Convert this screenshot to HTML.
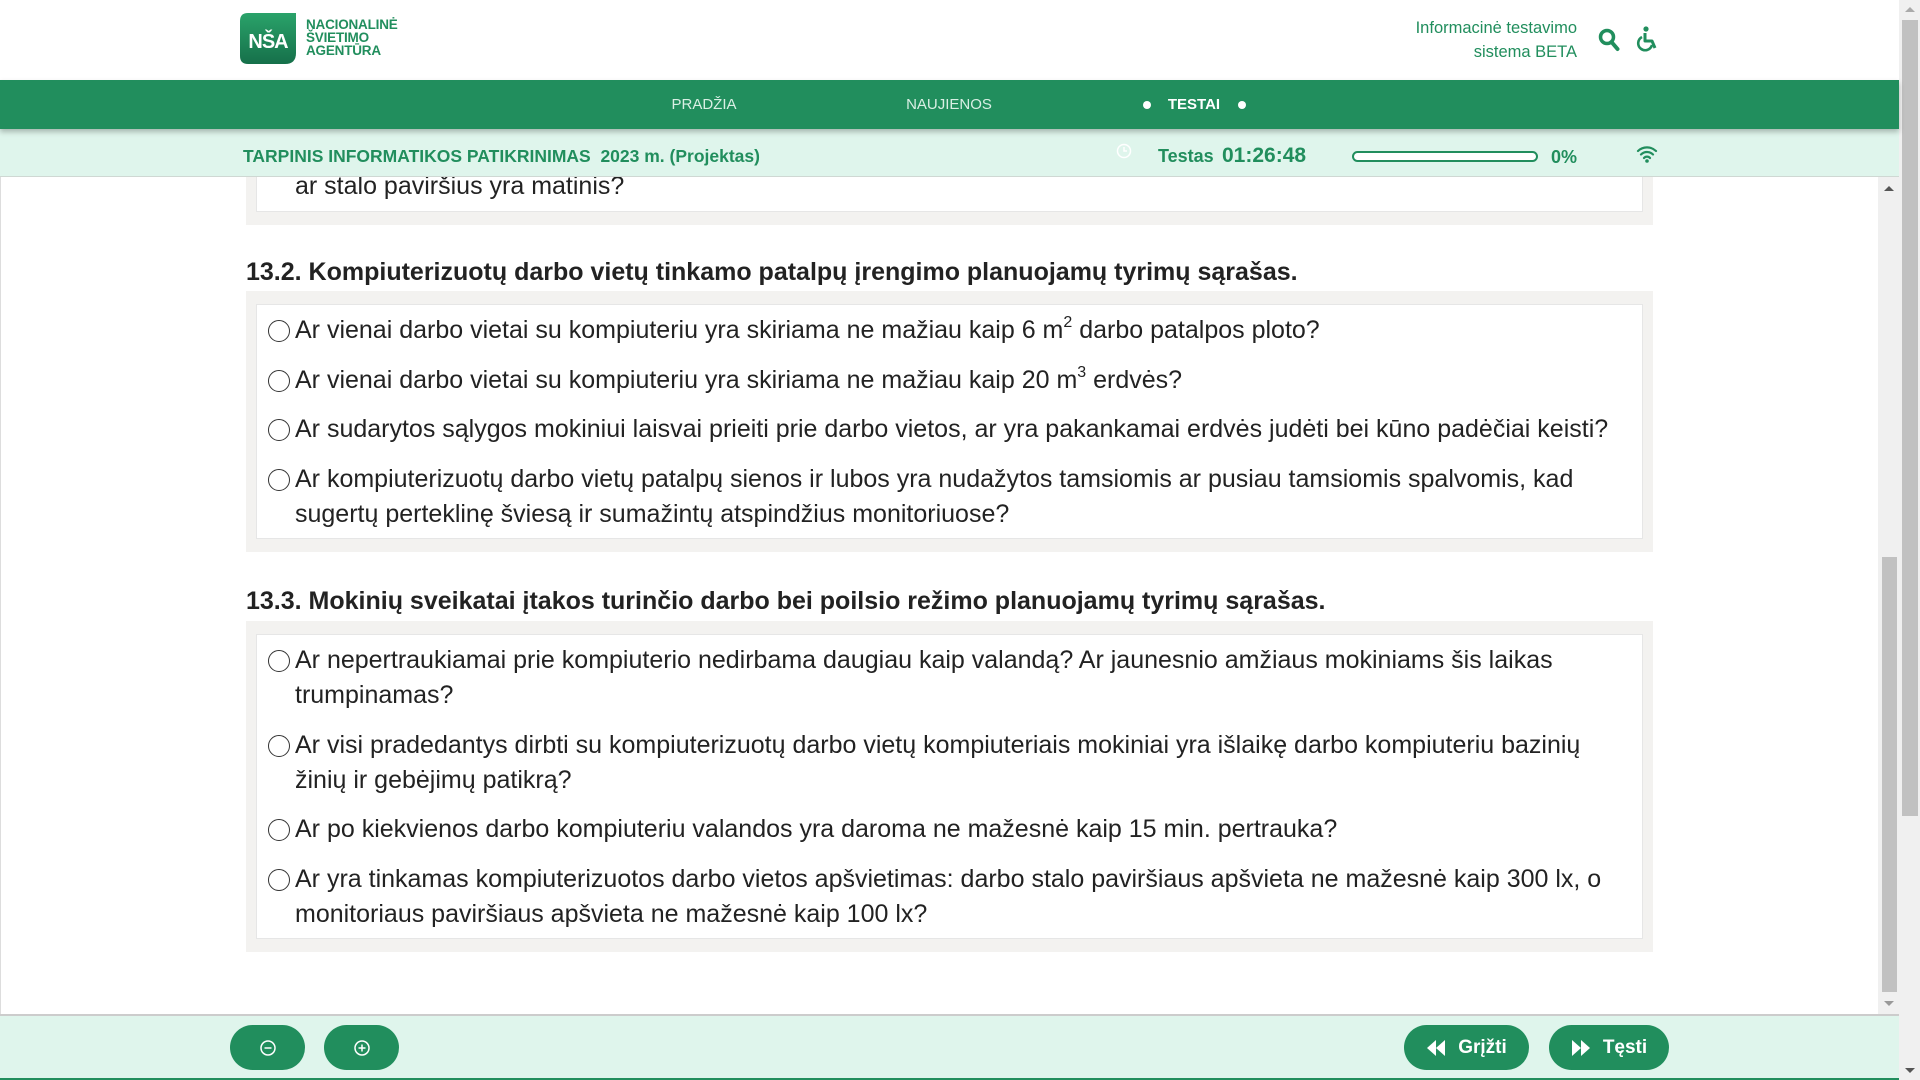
<!DOCTYPE html>
<html><head><meta charset="utf-8"><style>
*{box-sizing:border-box;margin:0;padding:0}
body{width:1920px;height:1080px;overflow:hidden;background:#fff;font-family:"Liberation Sans",Arial,sans-serif;position:relative;color:#222}
.hdr{position:absolute;left:0;top:0;width:1899px;height:80px;background:#fff}
.nav{position:absolute;left:0;top:80px;width:1899px;height:49px;background:#218e5d;box-shadow:0 3px 5px rgba(0,0,0,.25);z-index:3}
.nav span{position:absolute;top:16px;font-size:15px;color:#d9efe4;transform:translateX(-50%)}
.sub{position:absolute;left:0;top:129px;width:1899px;height:48px;background:#dff5ec;border-bottom:1px solid #cfd8d3;z-index:2}
.g{color:#218e5d;font-weight:bold}
.content{position:absolute;left:0;top:177px;width:1878px;height:837px;overflow:hidden;background:#fff;border-left:1px solid #ddd}
.card{position:absolute;left:245px;width:1407px;background:#f3f2f0;padding:13px 10px 13px 10px}
.inner{background:#fff;border:1px solid #e6e6e6;padding:8px 0 6px 38px}
.opt{position:relative;font-size:25px;line-height:35px;margin-bottom:14.6px;padding-right:20px}
.opt:last-child{margin-bottom:0}
.opt:before{content:"";position:absolute;left:-27px;top:7px;width:20px;height:20px;border:1.4px solid #333;border-radius:50%}
h3{position:absolute;left:245px;font-size:25px;font-weight:bold;color:#222}
sup{font-size:16px;line-height:0;vertical-align:0;position:relative;top:-11px}
.foot{position:absolute;left:0;top:1014px;width:1899px;height:66px;background:#dff5ec;border-top:2px solid #ccc;border-bottom:2px solid #218e5d}
.btn{position:absolute;top:9px;height:45px;background:#218e5d;border-radius:23px;color:#fff;font-weight:bold;font-size:19px;display:flex;align-items:center;justify-content:center;gap:12px}
.sb{position:absolute;background:#f0f0f0}
</style></head><body>
<div class="hdr">
 <svg style="position:absolute;left:240px;top:13px" width="56" height="51" viewBox="0 0 56 51"><defs><linearGradient id="lg" x1="0" y1="0" x2="0" y2="1"><stop offset="0" stop-color="#2aa36a"/><stop offset="1" stop-color="#16704a"/></linearGradient></defs><path d="M8 0H56V40Q56 51 45 51H8Q0 51 0 43V8Q0 0 8 0Z" fill="url(#lg)"/><text x="28" y="35" text-anchor="middle" font-family="Liberation Sans" font-weight="bold" font-size="20" fill="#fff" letter-spacing="-1">NŠA</text></svg>
 <div style="position:absolute;left:306px;top:18px;font-size:13.5px;line-height:13px;font-weight:bold;color:#218e5d;letter-spacing:-.2px">NACIONALINĖ<br>ŠVIETIMO<br>AGENTŪRA</div>
 <div style="position:absolute;right:322px;top:16px;text-align:right;font-size:16.5px;line-height:24px;color:#218e5d">Informacinė testavimo<br>sistema BETA</div>
 <svg style="position:absolute;left:1598px;top:28px" width="22" height="24" viewBox="0 0 22 24"><circle cx="9" cy="9" r="6.5" fill="none" stroke="#218e5d" stroke-width="3.5"/><path d="M13.5 14l6 7" stroke="#218e5d" stroke-width="4" stroke-linecap="round"/></svg>
 <svg style="position:absolute;left:1636px;top:26px" width="24" height="26" viewBox="0 0 24 26"><circle cx="10" cy="3" r="2.6" fill="#218e5d"/><path d="M9 7v8h7l3 7" fill="none" stroke="#218e5d" stroke-width="3" stroke-linejoin="round"/><path d="M6 11a7 7 0 1 0 10 8" fill="none" stroke="#218e5d" stroke-width="2.6"/></svg>
</div>
<div class="nav">
 <span style="left:704px">PRADŽIA</span>
 <span style="left:949px">NAUJIENOS</span>
 <span style="left:1194px;color:#fff;font-weight:bold">TESTAI</span>
 <i style="position:absolute;left:1143px;top:21px;width:8px;height:8px;border-radius:50%;background:#fff"></i>
 <i style="position:absolute;left:1238px;top:21px;width:8px;height:8px;border-radius:50%;background:#fff"></i>
</div>
<div class="sub">
 <div class="g" style="position:absolute;left:243px;top:17px;font-size:17.5px">TARPINIS INFORMATIKOS PATIKRINIMAS&nbsp; 2023 m. (Projektas)</div>
 <svg style="position:absolute;left:1116px;top:14px" width="16" height="16"><circle cx="8" cy="8" r="6.5" fill="none" stroke="#fff" stroke-width="1.5"/><path d="M8 4v4h3" stroke="#fff" fill="none" stroke-width="1.5"/></svg>
 <div class="g" style="position:absolute;left:1158px;top:17px;font-size:18px">Testas</div>
 <div class="g" style="position:absolute;left:1222px;top:15px;font-size:21px">01:26:48</div>
 <div style="position:absolute;left:1352px;top:22px;width:186px;height:11px;border:2px solid #218e5d;border-radius:6px;background:#fff"></div>
 <div class="g" style="position:absolute;left:1551px;top:18px;font-size:18px">0%</div>
 <svg style="position:absolute;left:1636px;top:16px" width="22" height="18" viewBox="0 0 22 18"><path d="M2 6a13 13 0 0 1 18 0M5 9.5a8.5 8.5 0 0 1 12 0M8 13a4 4 0 0 1 6 0" fill="none" stroke="#218e5d" stroke-width="2.2" stroke-linecap="round"/><circle cx="11" cy="16" r="1.8" fill="#218e5d"/></svg>
</div>
<div class="content">
 <div class="card" style="top:-60px;height:108px"><div class="inner" style="height:82px;padding-top:38px"><div style="font-size:25px;line-height:35px">ar stalo paviršius yra matinis?</div></div></div>
 <h3 style="top:81px">13.2. Kompiuterizuotų darbo vietų tinkamo patalpų įrengimo planuojamų tyrimų sąrašas.</h3>
 <div class="card" style="top:114px">
  <div class="inner">
   <div class="opt">Ar vienai darbo vietai su kompiuteriu yra skiriama ne mažiau kaip 6 m<sup>2</sup> darbo patalpos ploto?</div>
   <div class="opt">Ar vienai darbo vietai su kompiuteriu yra skiriama ne mažiau kaip 20 m<sup>3</sup> erdvės?</div>
   <div class="opt">Ar sudarytos sąlygos mokiniui laisvai prieiti prie darbo vietos, ar yra pakankamai erdvės judėti bei kūno padėčiai keisti?</div>
   <div class="opt">Ar kompiuterizuotų darbo vietų patalpų sienos ir lubos yra nudažytos tamsiomis ar pusiau tamsiomis spalvomis, kad sugertų perteklinę šviesą ir sumažintų atspindžius monitoriuose?</div>
  </div>
 </div>
 <h3 style="top:410px">13.3. Mokinių sveikatai įtakos turinčio darbo bei poilsio režimo planuojamų tyrimų sąrašas.</h3>
 <div class="card" style="top:444px">
  <div class="inner">
   <div class="opt">Ar nepertraukiamai prie kompiuterio nedirbama daugiau kaip valandą? Ar jaunesnio amžiaus mokiniams šis laikas trumpinamas?</div>
   <div class="opt">Ar visi pradedantys dirbti su kompiuterizuotų darbo vietų kompiuteriais mokiniai yra išlaikę darbo kompiuteriu bazinių žinių ir gebėjimų patikrą?</div>
   <div class="opt">Ar po kiekvienos darbo kompiuteriu valandos yra daroma ne mažesnė kaip 15 min. pertrauka?</div>
   <div class="opt">Ar yra tinkamas kompiuterizuotos darbo vietos apšvietimas: darbo stalo paviršiaus apšvieta ne mažesnė kaip 300 lx, o monitoriaus paviršiaus apšvieta ne mažesnė kaip 100 lx?</div>
  </div>
 </div>
</div>
<div class="sb" style="left:1878px;top:177px;width:21px;height:837px"></div>
<div style="position:absolute;left:1882px;top:557px;width:15px;height:435px;background:#c1c1c1"></div>
<div style="position:absolute;left:1884px;top:186px;border:5px solid transparent;border-bottom:5px solid #555;border-top:0;width:0"></div>
<div style="position:absolute;left:1884px;top:1001px;border:5px solid transparent;border-top:5px solid #999;border-bottom:0;width:0"></div>
<div class="sb" style="left:1899px;top:0;width:21px;height:1080px"></div>
<div style="position:absolute;left:1902px;top:20px;width:16px;height:796px;background:#c1c1c1"></div>
<div style="position:absolute;left:1905px;top:7px;border:5px solid transparent;border-bottom:5px solid #aaa;border-top:0;width:0"></div>
<div style="position:absolute;left:1905px;top:1068px;border:5px solid transparent;border-top:5px solid #555;border-bottom:0;width:0"></div>
<div class="foot">
 <div class="btn" style="left:230px;width:75px"><svg width="18" height="18"><circle cx="9" cy="9" r="7" fill="none" stroke="#fff" stroke-width="1.5"/><path d="M5.5 9h7" stroke="#fff" stroke-width="1.5"/></svg></div>
 <div class="btn" style="left:324px;width:75px"><svg width="18" height="18"><circle cx="9" cy="9" r="7" fill="none" stroke="#fff" stroke-width="1.5"/><path d="M5.5 9h7M9 5.5v7" stroke="#fff" stroke-width="1.5"/></svg></div>
 <div class="btn" style="left:1404px;width:125px"><svg width="20" height="16"><path d="M10 0v16L1 8zM19 0v16L10 8z" fill="#fff"/></svg>Grįžti</div>
 <div class="btn" style="left:1549px;width:120px"><svg width="20" height="16"><path d="M1 0v16l9-8zM10 0v16l9-8z" fill="#fff"/></svg>Tęsti</div>
</div>
</body></html>
